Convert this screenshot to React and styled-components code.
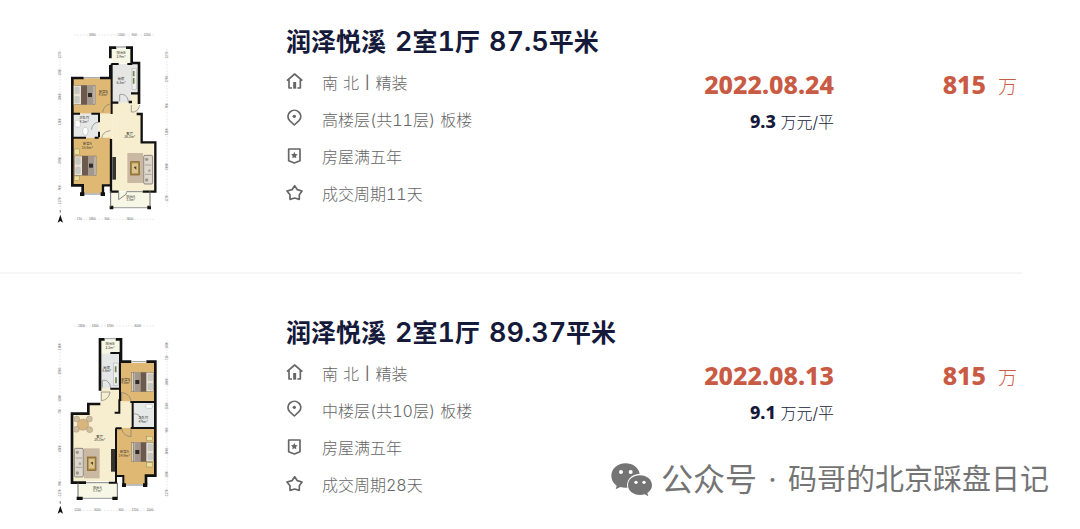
import styled, { createGlobalStyle } from "styled-components";

const houses = [
  {
    id: 1,
    name: "润泽悦溪 2室1厅 87.5平米",
    facing: "南 北 | 精装",
    floor: "高楼层(共11层) 板楼",
    years: "房屋满五年",
    period: "成交周期11天",
    date: "2022.08.24",
    unit: "9.3",
    total: "815",
  },
  {
    id: 2,
    name: "润泽悦溪 2室1厅 89.37平米",
    facing: "南 北 | 精装",
    floor: "中楼层(共10层) 板楼",
    years: "房屋满五年",
    period: "成交周期28天",
    date: "2022.08.13",
    unit: "9.1",
    total: "815",
  },
];

const HomeIcon = () => (
  <Icon viewBox="6 0 54 60" aria-hidden="true">
    <path d="M9 26 L32 6 L55 26 M15 22 V48 H24 M49 22 V48 H40" />
    <path d="M32 30 V50" strokeWidth="9" />
  </Icon>
);

const PinIcon = () => (
  <Icon viewBox="6 0 54 60" aria-hidden="true">
    <path d="M31 48 L17 35 C9 27 11 15 18 9 C26 2 37 2 44 9 C52 15 53 27 45 35 Z" />
    <circle cx="31" cy="22" r="5" fill="#666" stroke="none" />
  </Icon>
);

const BadgeIcon = () => (
  <Icon viewBox="6 0 54 60" aria-hidden="true">
    <path d="M14 9 H48 V44 L31 51 L14 44 Z" />
    <path d="M31 17 L34 24 L41 25 L36 30 L37 37 L31 34 L25 37 L26 30 L21 25 L28 24 Z" fill="#666" stroke="none" />
  </Icon>
);

const StarIcon = () => (
  <Icon viewBox="6 0 54 60" aria-hidden="true">
    <path d="M32 8 L40 20 L54 24 L46 35 L46 49 L32 45 L18 49 L18 35 L9 24 L24 20 Z" />
  </Icon>
);

const Bed = ({ x, y, flip }) => (
  <g transform={`translate(${x} ${y}) scale(${flip ? -1 : 1} 1)`}>
    <rect width="66" height="58" fill="#e9e2d5" stroke="#7c6d56" strokeWidth="1.5" />
    <rect x="2" y="4" width="16" height="22" rx="4" fill="#c8c8c3" />
    <rect x="2" y="32" width="16" height="22" rx="4" fill="#c8c8c3" />
    <rect x="22" width="18" height="58" fill="#6b5a4d" />
    <rect x="40" width="18" height="58" fill="#a4978b" />
    <rect x="43" y="23" width="12" height="12" fill="#2e2a28" />
    <path d="M61 0 V58" stroke="#5d5046" strokeWidth="2" />
  </g>
);

const Sofa = ({ x, y }) => (
  <g transform={`translate(${x} ${y})`}>
    <rect width="27" height="86" rx="4" fill="#ddd7cd" stroke="#625b54" strokeWidth="2" />
    <path d="M4 29 H23 M4 57 H23" stroke="#8e877e" strokeWidth="2" />
    <circle cx="9" cy="12" r="5" fill="#9e978e" />
    <circle cx="17" cy="46" r="4" fill="#aaa399" />
    <circle cx="9" cy="74" r="5" fill="#9e978e" />
  </g>
);

const Rug = ({ x, y }) => (
  <g transform={`translate(${x} ${y})`}>
    <rect width="47" height="90" fill="#c9b8a2" />
    <rect x="10" y="26" width="26" height="40" fill="#a98542" stroke="#7b5d2b" strokeWidth="2" />
    <rect x="14" y="31" width="18" height="30" fill="#d9c48e" />
    <path d="M19 43 L27 40 L27 50 Z" fill="#4f4227" />
  </g>
);

const Label = ({ x, y, name, size }) => (
  <PlanText x={x} y={y}>
    {name}
    <tspan x={x} dy="10">
      {size}
    </tspan>
  </PlanText>
);

const Compass = () => (
  <g fill="#111">
    <path d="M31 569 L39 593 L31 588 L23 593 Z" />
    <path d="M29 555 H33 V563 H29 Z" fill="#999" />
  </g>
);

const Rulers = ({ top, left, right, bottom }) => (
  <g>
    <path d="M72 30 H312 M72 583 H312 M30 72 V548 M351 72 V545" stroke="#c4c4c4" strokeDasharray="6 3" />
    {top.map(([x, value]) => (
      <RulerText key={x} x={x} y="33">
        {value}
      </RulerText>
    ))}
    {bottom.map(([x, value]) => (
      <RulerText key={x} x={x} y="586">
        {value}
      </RulerText>
    ))}
    {left.map(([y, value]) => (
      <RulerText key={y} transform={`translate(33 ${y}) rotate(-90)`}>
        {value}
      </RulerText>
    ))}
    {right.map(([y, value]) => (
      <RulerText key={y} transform={`translate(354 ${y}) rotate(-90)`}>
        {value}
      </RulerText>
    ))}
  </g>
);

const PlanA = () => (
  <Plan viewBox="0 0 375 600" role="img" aria-label="户型图">
    <Rulers
      top={[[127, "3300"], [214, "1500"], [253, "900"], [291, "1200"]]}
      left={[[90, "1270"], [142, "1200"], [215, "3000"], [290, "1500"], [406, "3900"], [488, "900"], [527, "1270"]]}
      right={[[90, "1270"], [162, "2700"], [242, "900"], [320, "1200"], [424, "6000"], [520, "1270"]]}
      bottom={[[88, "710"], [127, "1800"], [171, "900"], [240, "3600"]]}
    />
    <path d="M184 70 H243 V115 H184 Z" fill="#f6f7e4" />
    <path d="M187 117 H266 V235 H187 Z" fill="#e6e7e5" />
    <path d="M187 233 H242 V208 H266 V265 H274 V350 H311 V498 H187 Z" fill="#f7eecf" />
    <path d="M68 160 H184 V266 H68 Z" fill="#dfb974" />
    <path d="M68 266 H144 V338 H68 Z" fill="#e6e8e8" />
    <path d="M144 266 H187 V342 H144 Z" fill="#f7eecf" />
    <path d="M68 338 H183 V480 H156 V505 H97 V480 H68 Z" fill="#dfb974" />
    <path d="M184 500 H299 V546 H184 Z" fill="#f6f7e4" />
    <g fill="none" stroke="#111" strokeWidth="8">
      <path d="M199 68 H181 V100 M228 68 H245 V114 H267 V237 M181 120 V157 M150 159 H184 M101 159 H67 V481 H98 V505 M125 481" />
      <path d="M184 117 H206 M232 117 H247 M185 116 V267 M67 266 H90 M124 266 H147 V292 M147 320 V337 M67 338 H108 M134 338 H146" strokeWidth="6" />
      <path d="M184 233 H205 M236 231 H246 M243 205 H266 M260 267 H275 V352 H316 V500 H299 M183 342 V503 M159 505 V481 H186 M184 500 H206 M278 500 H299" strokeWidth="7" />
    </g>
    <path d="M97 507 H160 M182 548 H300" stroke="#aaa" strokeWidth="4" />
    <g fill="#111">
      <path d="M90 502 H103 V513 H90 Z M152 502 H165 V513 H152 Z M179 542 H190 V553 H179 Z M292 542 H303 V553 H292 Z" />
    </g>
    <path d="M182 498 V546 M300 498 V546" stroke="#666" strokeWidth="3" />
    <path d="M199 66 H228 M102 158 H150" stroke="#aaa" strokeWidth="4" />
    <path d="M209 229 V209 C220 205 234 212 235 231 M158 262 C160 246 172 238 182 237 M244 240 V261 C258 263 267 252 269 240 M156 340 C156 326 166 319 181 317 M146 292 C135 292 126 299 125 314" fill="none" stroke="#777" strokeWidth="2" />
    <path d="M206 502 V524 L229 507 V502 M229 500 H278" fill="none" stroke="#888" strokeWidth="3" />
    <rect x="246" y="130" width="14" height="64" fill="#eee" stroke="#888" />
    <path d="M251 138 V154 M251 159 V176" stroke="#70834c" strokeWidth="5" />
    <Bed x={71} y={181} />
    <Bed x={74} y={393} />
    <rect x="73" y="372" width="15" height="17" fill="#eadf9b" stroke="#79684a" />
    <rect x="73" y="453" width="15" height="14" fill="#eadf9b" stroke="#79684a" />
    <rect x="75" y="286" width="16" height="20" rx="3" fill="#fff" stroke="#999" />
    <ellipse cx="106" cy="319" rx="8" ry="12" fill="#fff" stroke="#888" />
    <Rug x={232} y={384} />
    <Sofa x={281} y={391} />
    <rect x="187" y="396" width="11" height="68" fill="#35332e" />
    <Label x={213} y={88} name="阳台B" size="2.9m²" />
    <Label x={213} y={166} name="厨房" size="6.2m²" />
    <Label x={160} y={204} name="卧室B" size="9.8m²" />
    <Label x={102} y={283} name="卫生间" size="4.2m²" />
    <Label x={112} y={361} name="卧室A" size="15.8m²" />
    <Label x={239} y={330} name="客厅" size="26.3m²" />
    <Label x={242} y={519} name="阳台A" size="3.5m²" />
    <Compass />
  </Plan>
);

const PlanB = () => (
  <Plan viewBox="0 0 375 600" role="img" aria-label="户型图">
    <Rulers
      top={[[95, "1800"], [135, "1300"], [180, "1700"], [263, "3000"]]}
      left={[[92, "1600"], [165, "3900"], [247, "1300"], [286, "710"], [398, "4200"], [502, "900"], [530, "1270"]]}
      right={[[88, "1600"], [126, "710"], [197, "3000"], [270, "1500"], [342, "900"], [405, "3000"], [475, "1600"], [530, "1270"]]}
      bottom={[[83, "1200"], [142, "3010"], [213, "900"], [255, "1700"], [300, "1000"]]}
    />
    <path d="M151 72 H212 V114 H151 Z" fill="#f6f7e4" />
    <path d="M151 113 H208 V219 H151 Z" fill="#e4e7e6" />
    <path d="M151 217 H210 V256 H248 V336 H199 V496 H67 V292 H115 V266 H151 Z" fill="#f7eecf" />
    <path d="M212 141 H315 V256 H212 Z" fill="#dfb974" />
    <path d="M248 260 H315 V335 H248 Z" fill="#e6e8e8" />
    <path d="M200 336 H315 V478 H287 V505 H220 V478 H200 Z" fill="#dfb974" />
    <path d="M84 500 H200 V545 H84 Z" fill="#f6f7e4" />
    <g fill="none" stroke="#111" strokeWidth="8">
      <path d="M164 70 H150 V224 M197 70 H213 V137 H244 M289 137 H316 V479 H288 V505 M151 264 H115 V293 H66 V500 H108" />
      <path d="M181 111 H213 M210 111 V255 M181 218 H213 M208 250 V290 H194 M241 258 H318 M248 258 V337 M197 337 H215 M242 336 H316 M198 337 V500 M200 480 H220 V505 M176 500 H201" strokeWidth="6" />
    </g>
    <path d="M164 68 H197 M245 137 H289 M221 507 H286 M85 547 H202" stroke="#aaa" strokeWidth="4" />
    <path d="M84 500 V544 M202 500 V544" stroke="#666" strokeWidth="3" />
    <path d="M216 502 H228 V513 H216 Z M279 502 H292 V513 H279 Z M80 542 H98 V552 H80 Z M187 542 H203 V552 H187 Z" fill="#111" />
    <path d="M157 215 V194 C169 188 181 201 182 216 M154 254 V228 H180 C177 245 168 252 154 254 M215 255 V230 C230 230 242 242 243 256 M216 340 C218 354 229 360 243 362 V340 M251 293 C266 294 272 300 274 315" fill="none" stroke="#777" strokeWidth="2" />
    <path d="M108 500 H176" stroke="#888" strokeWidth="3" />
    <rect x="190" y="141" width="15" height="67" fill="#eee" stroke="#888" />
    <path d="M197 151 V169 M198 184 V202" stroke="#70834c" strokeWidth="5" />
    <Bed x={311} y={169} flip />
    <Bed x={311} y={379} flip />
    <rect x="288" y="265" width="19" height="12" rx="3" fill="#fff" stroke="#888" />
    <rect x="290" y="361" width="18" height="13" fill="#eadf9b" stroke="#79684a" />
    <rect x="290" y="440" width="18" height="13" fill="#eadf9b" stroke="#79684a" />
    <circle cx="99" cy="326" r="17" fill="#d8b57d" stroke="#8c7554" />
    <g fill="#cebd9f" stroke="#8b7454">
      <circle cx="80" cy="309" r="9" />
      <circle cx="118" cy="309" r="9" />
      <circle cx="79" cy="340" r="9" />
      <circle cx="119" cy="341" r="9" />
    </g>
    <Rug x={102} y={397} />
    <Sofa x={73} y={397} />
    <rect x="183" y="399" width="12" height="68" fill="#35332e" />
    <Label x={180} y={88} name="阳台B" size="2.2m²" />
    <Label x={170} y={159} name="厨房" size="5.6m²" />
    <Label x={227} y={195} name="卧室B" size="9.8m²" />
    <Label x={279} y={310} name="卫生间" size="4.4m²" />
    <Label x={149} y={365} name="客厅" size="28.3m²" />
    <Label x={223} y={412} name="卧室A" size="14.9m²" />
    <Label x={142} y={519} name="阳台A" size="3.7m²" />
    <Compass />
  </Plan>
);

const WechatIcon = () => (
  <WechatSvg viewBox="0 0 126 102" aria-hidden="true">
    <path d="M44 1 C19 1 1 18 1 39 C1 51 7 61 17 68 L14 79 L28 72 C34 74 42 75 49 74 C44 51 62 33 86 32 C82 13 64 1 44 1 Z" />
    <path d="M87 37 C66 37 51 50 51 67 C51 84 67 96 87 96 C92 96 97 95 101 94 L112 100 L109 90 C118 84 123 77 123 67 C123 50 107 37 87 37 Z" />
    <g fill="#fff">
      <circle cx="30" cy="27" r="6" />
      <circle cx="59" cy="27" r="6" />
      <circle cx="75" cy="58" r="5" />
      <circle cx="99" cy="58" r="5" />
    </g>
  </WechatSvg>
);

// digits are set in a larger face than the characters around them
const HouseTitle = ({ text }) => (
  <Title>
    {text.split(" ").map((word) => (
      <span key={word}>
        {word.split(/([\d.]+)/).map((part, idx) => (idx % 2 ? <Digits key={idx}>{part}</Digits> : part))}
      </span>
    ))}
  </Title>
);

const DetailText = ({ text }) => (
  <Words>
    {text.split(" ").map((word) => (word === "|" ? <Bar key={word}>{word}</Bar> : <span key={word}>{word}</span>))}
  </Words>
);

const HouseItem = ({ house }) => (
  <Item>
    <PlanBox>{house.id === 1 ? <PlanA /> : <PlanB />}</PlanBox>
    <Info>
      <HouseTitle text={house.name} />
      <Details>
        <Detail>
          <HomeIcon />
          <DetailText text={house.facing} />
        </Detail>
        <Detail>
          <PinIcon />
          <DetailText text={house.floor} />
        </Detail>
        <Detail>
          <BadgeIcon />
          <DetailText text={house.years} />
        </Detail>
        <Detail>
          <StarIcon />
          <DetailText text={house.period} />
        </Detail>
      </Details>
    </Info>
    <Deal>
      <Strong>{house.date}</Strong>
      <UnitPrice>
        <b>{house.unit}</b> 万元/平
      </UnitPrice>
    </Deal>
    <Total>
      <Strong>{house.total}</Strong>
      <Wan>万</Wan>
    </Total>
  </Item>
);

const App = () => {
  return (
    <>
      <GlobalStyle />
      <List>
        {houses.map((house) => (
          <HouseItem key={house.id} house={house} />
        ))}
      </List>
      <Watermark>
        <WechatIcon />
        <Account>公众号</Account>
        <Dot>·</Dot>
        <span>码哥的北京踩盘日记</span>
      </Watermark>
    </>
  );
};

export default App;

const GlobalStyle = createGlobalStyle`
  * {
    box-sizing: border-box;
  }

  body {
    margin: 0;
    background: #fff;
    font-family: Inter, "Noto Sans CJK SC", sans-serif;
  }
`;

const List = styled.ul`
  margin: 0;
  padding: 25px 58px 0 0;
  list-style: none;
`;

const Item = styled.li`
  display: grid;
  grid-template-columns: 286px 1fr 180px 183px;

  & + & {
    margin-top: 47px;
    padding-top: 42px;
    border-top: 2px solid #f6f6f6;
  }
`;

const PlanBox = styled.div`
  padding-left: 50px;
`;

const Plan = styled.svg`
  display: block;
  width: 125px;
  height: 200px;
`;

const PlanText = styled.text`
  font-family: "Noto Sans CJK SC", sans-serif;
  font-size: 10px;
  font-weight: 400;
  text-anchor: middle;
  fill: #39352e;
`;

const RulerText = styled.text`
  font-family: "Liberation Sans", sans-serif;
  font-size: 9px;
  text-anchor: middle;
  fill: #666;
`;

const Info = styled.div`
  min-width: 0;
`;

const Title = styled.h2`
  display: flex;
  gap: 9px;
  height: 32px;
  margin: 0 0 6px;
  font-size: 25px;
  font-weight: 600;
  font-feature-settings: "tnum";
  line-height: 34px;
  color: #15193a;
  white-space: nowrap;
`;

const Digits = styled.span`
  font-size: 27px;
`;

const Details = styled.ul`
  margin: 0;
  padding: 0;
  list-style: none;
`;

const Detail = styled.li`
  display: flex;
  align-items: center;
  gap: 18px;
  height: 37px;
  font-size: 16px;
  font-weight: 300;
  font-feature-settings: "tnum";
  color: #666;
  white-space: nowrap;
`;

const Words = styled.span`
  display: flex;
  align-items: center;
  gap: 5px;
`;

const Bar = styled.span`
  padding: 0 1px;
  font-size: 13px;
  font-weight: 500;
`;

const Icon = styled.svg`
  flex: none;
  width: 18px;
  height: 20px;
  fill: none;
  stroke: #666;
  stroke-width: 5;
  stroke-linejoin: round;
`;

const Deal = styled.div`
  padding-top: 41px;
  text-align: right;
  padding-right: 5px;
`;

const Strong = styled.strong`
  display: block;
  font-family: "Noto Sans", sans-serif;
  font-size: 25px;
  font-weight: 800;
  line-height: 36px;
  color: #c95a44;
`;

const UnitPrice = styled.div`
  font-size: 16px;
  font-weight: 300;
  line-height: 38px;
  color: #15193a;

  b {
    font-family: "Noto Sans", sans-serif;
    font-size: 18px;
    font-weight: 800;
  }
`;

const Total = styled.div`
  display: flex;
  justify-content: flex-end;
  align-items: baseline;
  gap: 12px;
  padding: 41px 5px 0 0;
`;

const Wan = styled.span`
  font-size: 19px;
  font-weight: 300;
  line-height: 36px;
  color: #c95a44;
`;

const Watermark = styled.div`
  position: absolute;
  right: 31px;
  bottom: 28px;
  display: flex;
  align-items: flex-start;
  height: 38px;
  font-size: 29px;
  font-weight: 400;
  line-height: 34px;
  color: #747474;
  white-space: nowrap;
`;

const WechatSvg = styled.svg`
  width: 42px;
  height: 34px;
  margin-right: 8px;
  fill: #747474;
`;

const Account = styled.span`
  font-size: 32px;
`;

const Dot = styled.span`
  width: 31px;
  text-align: center;
`;
